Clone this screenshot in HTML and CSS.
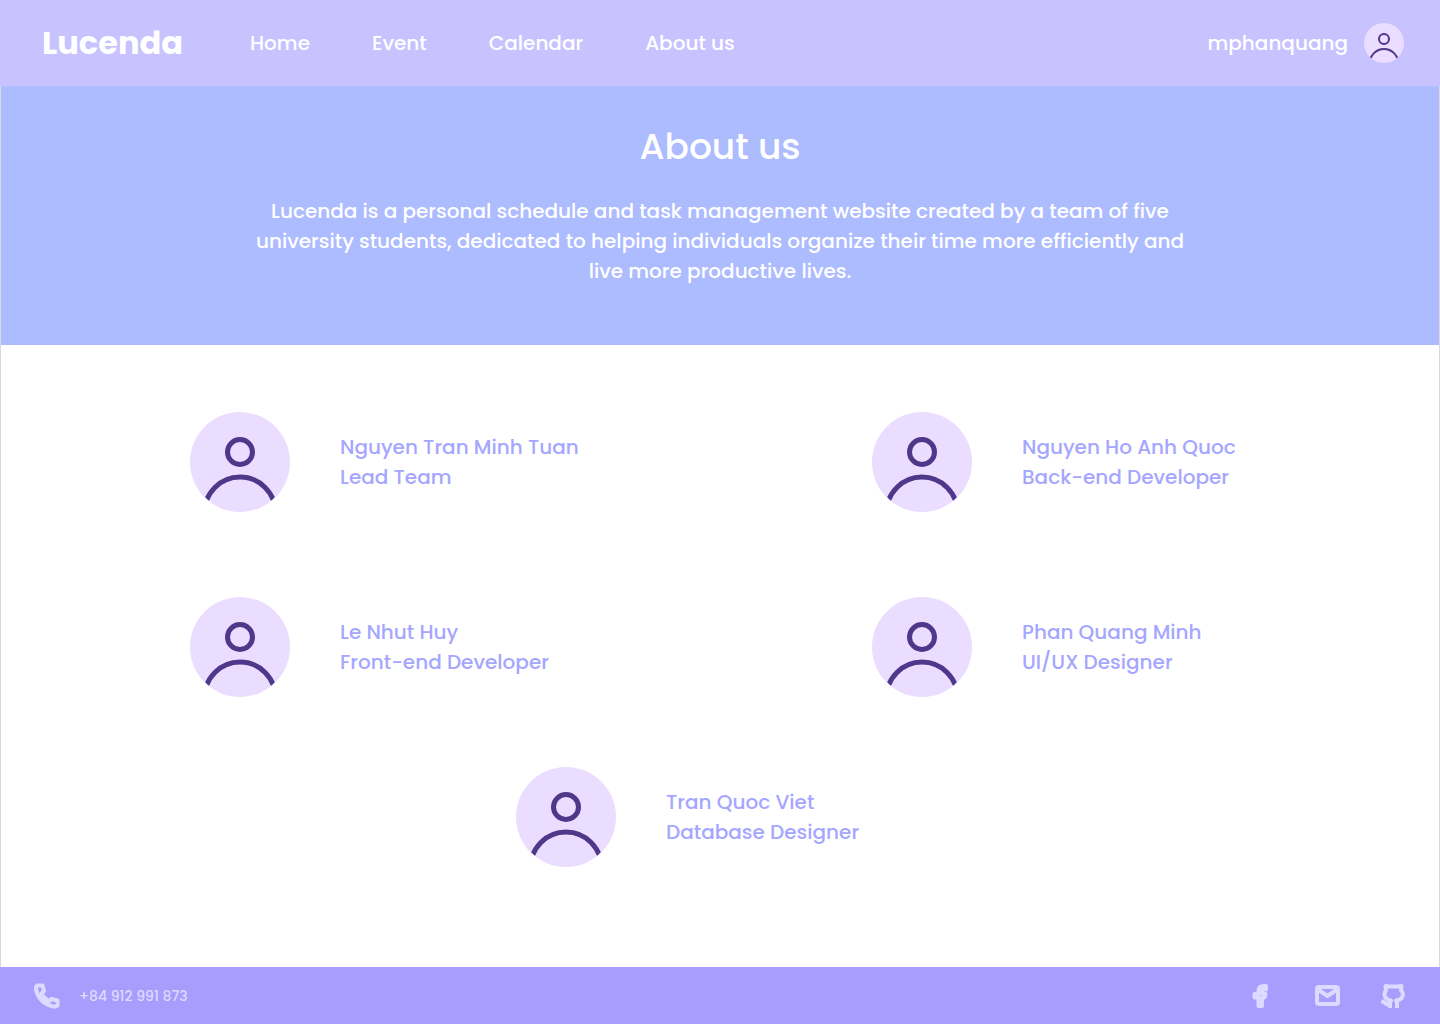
FILE: index.html
```html
<!DOCTYPE html>
<html lang="en">
<head>
<meta charset="utf-8">
<meta name="viewport" content="width=device-width, initial-scale=1">
<title>Lucenda - About us</title>
<link rel="stylesheet" href="styles.css">
</head>
<body>
<svg class="sprite" aria-hidden="true">
  <symbol id="avatar" viewBox="0 0 100 100">
    <clipPath id="trim"><path d="M0 0H100V85L85 85L81.500 88.500H18.500L15 85L0 85Z"/></clipPath>
    <circle cx="50" cy="50" r="50" fill="#eaddff"/>
    <g fill="none" stroke="#4f378a" stroke-width="5">
      <circle cx="50" cy="40" r="12.500"/>
      <circle clip-path="url(#trim)" cx="50" cy="100.500" r="35.500"/>
    </g>
  </symbol>
</svg>
<header class="topbar">
  <a class="brand" href="#">Lucenda</a>
  <nav class="nav">
    <a href="#">Home</a>
    <a href="#">Event</a>
    <a href="#">Calendar</a>
    <a href="#">About us</a>
  </nav>
  <a class="account" href="#">mphanquang <svg class="account-avatar" aria-hidden="true"><use href="#avatar"/></svg></a>
</header>
<main class="page">
  <section class="hero">
    <h1>About us</h1>
    <p>Lucenda is a personal schedule and task management website created by a team of five university students, dedicated to helping individuals organize their time more efficiently and live more productive lives.</p>
  </section>
  <section class="team" aria-label="Team">
    <article class="member"><svg class="avatar" aria-hidden="true"><use href="#avatar"/></svg><p>Nguyen Tran Minh Tuan<br>Lead Team</p></article>
    <article class="member"><svg class="avatar" aria-hidden="true"><use href="#avatar"/></svg><p>Nguyen Ho Anh Quoc<br>Back-end Developer</p></article>
    <article class="member"><svg class="avatar" aria-hidden="true"><use href="#avatar"/></svg><p>Le Nhut Huy<br>Front-end Developer</p></article>
    <article class="member"><svg class="avatar" aria-hidden="true"><use href="#avatar"/></svg><p>Phan Quang Minh<br>UI/UX Designer</p></article>
  </section>
  <article class="member member-last"><svg class="avatar" aria-hidden="true"><use href="#avatar"/></svg><p>Tran Quoc Viet<br>Database Designer</p></article>
</main>
<footer class="footer">
  <a class="phone" href="tel:+84912991873">
    <svg class="icon" viewBox="0 0 28 28" aria-hidden="true"><path d="M4 3.500H9.500L11 9L8.500 11.500Q11.500 17 16 19L18.500 16.800L24.500 18.500V23.500Q22 25.500 18.500 24C10 21.500 4 15 3 7Q2.800 5 4 3.500Z"/></svg>
    +84 912 991 873
  </a>
  <nav class="social" aria-label="Social links">
    <a href="#" aria-label="Facebook"><svg class="icon" viewBox="0 0 28 28"><path d="M19 4H17Q11.500 4 11.500 9V12H7.500V15.500H11.500V24H15V15.500H17.500L18.500 12H15V9Q15 7.500 16.500 7.500H19Z"/></svg></a>
    <a href="mailto:hello@lucenda.example" aria-label="Email"><svg class="icon" viewBox="0 0 28 28"><rect x="4" y="5" width="21" height="17" rx="2"/><path d="M5 7.500L14.500 14L24 7.500"/></svg></a>
    <a href="#" aria-label="GitHub"><svg class="icon icon-github" viewBox="0 0 28 28"><path d="M11 26V20.500L12 18.500Q5.500 17.500 5.500 12Q5.500 10 7 8.500L6.500 4L11 4.500H18L22.500 4L22 8.500Q24 10 24 12Q24 17.500 17 18.500L18 20.500V26M10.500 22.500Q7.500 23 6 21L2.500 18.800"/></svg></a>
  </nav>
</footer>
</body>
</html>
```
FILE: styles.css
```css
* { box-sizing: border-box; }
body {
  margin: 0;
  min-height: 100vh;
  display: flex;
  flex-direction: column;
  background: #fff;
  color: #fff;
  font: 500 20px/30px Poppins, Inter, sans-serif;
}
a { color: inherit; text-decoration: none; }
h1, p { margin: 0; }
.sprite { position: absolute; width: 0; height: 0; }
.topbar {
  display: flex;
  align-items: center;
  height: 86px;
  padding: 0 36px 0 42px;
  background: #c8c2ff;
}
.brand { width: 208px; font-size: 32px; line-height: 48px; font-weight: 700; }
.nav { display: flex; gap: 62px; }
.account { display: flex; align-items: center; gap: 16px; margin-left: auto; }
.account-avatar { width: 40px; height: 40px; }
.page { flex: 1; border: solid #d9d9d9; border-width: 0 1px; padding-bottom: 100px; }
.hero { padding: 36px 24px 59px; background: #adbbff; text-align: center; }
.hero h1 { margin-bottom: 24px; font-size: 36px; line-height: 50px; font-weight: 500; }
.hero p { max-width: 940px; margin: 0 auto; }
.team {
  display: grid;
  grid-template-columns: minmax(0, 1fr) minmax(0, 1fr);
  gap: 85px 304px;
  padding: 67px 189px 0;
}
.member { display: flex; align-items: center; gap: 50px; color: #a5a6ff; white-space: nowrap; }
.member-last { width: 408px; margin: 70px auto 0; }
.avatar { flex: none; width: 100px; height: 100px; }
.footer {
  display: flex;
  align-items: center;
  justify-content: space-between;
  height: 57px;
  padding: 0 33px;
  background: #a89dfc;
  color: #ded9ff;
}
.phone { display: flex; align-items: center; gap: 18px; font-size: 14px; }
.social { display: flex; gap: 38px; }
.social a { display: flex; }
.icon { width: 28px; height: 28px; fill: none; stroke: currentColor; stroke-width: 4; stroke-linejoin: round; stroke-linecap: round; }
.icon-github { stroke-linecap: butt; }
```
